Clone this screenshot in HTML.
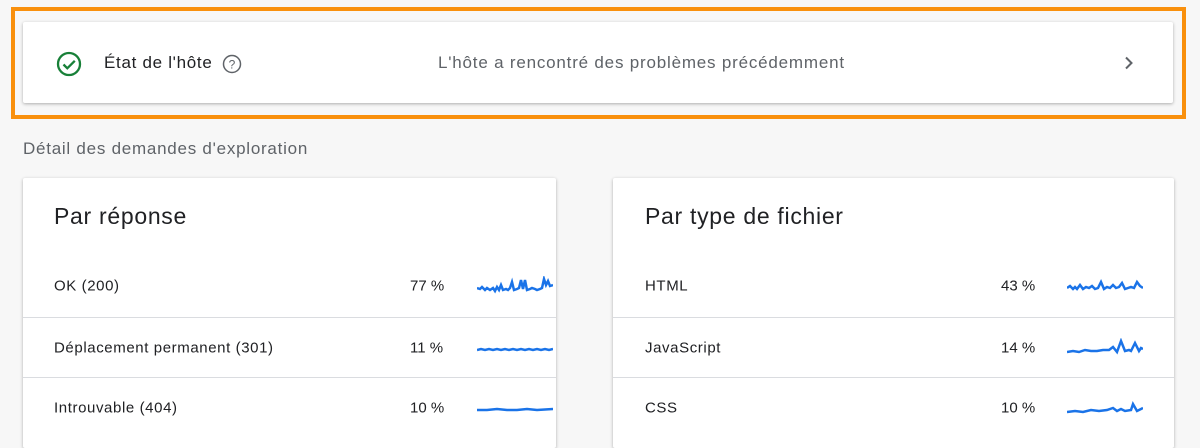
<!DOCTYPE html>
<html><head><meta charset="utf-8"><style>
body{margin:0;width:1200px;height:435px;background:#f7f7f7;font-family:"Liberation Sans",Roboto,sans-serif;overflow:hidden;position:relative;color:#202124}
.ob{position:absolute;left:11px;top:7px;width:1167px;height:104px;border:4px solid #f9900d;}
.card{position:absolute;background:#fff;box-shadow:0 1px 3px rgba(0,0,0,.3);border-radius:2px}
.t{position:absolute;white-space:nowrap}
.row{position:absolute;left:0;right:0;height:60px;border-top:1px solid #dadce0}
.row span{position:absolute;top:50%;transform:translateY(-50%);font-size:15px}
.row span.l{letter-spacing:0.6px}
svg.sp{position:absolute;top:50%;transform:translateY(-50%)}
</style></head><body>
<div class="ob"></div>
<div class="card" style="left:23px;top:22px;width:1150px;height:81px">
 <svg style="position:absolute;left:33px;top:29px" width="26" height="26" viewBox="0 0 26 26"><circle cx="13" cy="13" r="11" fill="none" stroke="#188038" stroke-width="2.3"/><path d="M7.5 13.5l3.8 3.8 7.5-7.5" fill="none" stroke="#188038" stroke-width="2.3"/></svg>
 <div class="t" style="left:81px;top:31px;font-size:17px;letter-spacing:0.7px">État de l'hôte</div>
 <svg style="position:absolute;left:199px;top:32px" width="20" height="20" viewBox="0 0 20 20"><circle cx="10" cy="10" r="8.5" fill="none" stroke="#5f6368" stroke-width="1.5"/><text x="10" y="14.5" font-size="12" text-anchor="middle" fill="#5f6368" font-family="Liberation Sans">?</text></svg>
 <div class="t" style="left:415px;top:31px;font-size:17px;letter-spacing:0.8px;color:#5f6368">L'hôte a rencontré des problèmes précédemment</div>
 <svg style="position:absolute;left:1099px;top:34px" width="14" height="14" viewBox="0 0 14 14"><path d="M4 1.5l5.5 5.5L4 12.5" fill="none" stroke="#5f6368" stroke-width="2"/></svg>
</div>
<div class="t" style="left:23px;top:139px;font-size:17px;letter-spacing:0.75px;color:#5f6368">Détail des demandes d'exploration</div>

<div class="card" style="left:23px;top:178px;width:533px;height:270px">
 <div class="t" style="left:31px;top:25px;font-size:23px;letter-spacing:0.7px">Par réponse</div>
 <div class="row" style="top:78px;border-top:none"><span class="l" style="left:31px">OK (200)</span><span style="left:387px">77 %</span>
  <svg class="sp" style="left:454px" width="76" height="20"><polyline fill="none" stroke="#1a73e8" stroke-width="2.5" points="0,12 3,13 5,11 8,14 10,12 13,14 16,12 18,15 20,11 22,14 24,9 26,14 29,13 31,14 33,12 35,6 37,14 40,13 42,12 44,4 46,13 48,4 50,14 53,13 55,12 58,13 60,14 63,13 65,12 67,3 69,9 71,5 73,10 76,9"/></svg></div>
 <div class="row" style="top:139px"><span class="l" style="left:31px">Déplacement permanent (301)</span><span style="left:387px">11 %</span>
  <svg class="sp" style="left:454px" width="76" height="20"><polyline fill="none" stroke="#1a73e8" stroke-width="2.5" points="0,12 4,11 8,12 12,11 16,12 20,11 24,12 28,11 32,12 36,11 40,12 44,11 48,12 52,11 56,12 60,11 64,12 68,11 72,12 76,11"/></svg></div>
 <div class="row" style="top:199px"><span class="l" style="left:31px">Introuvable (404)</span><span style="left:387px">10 %</span>
  <svg class="sp" style="left:454px" width="76" height="20"><polyline fill="none" stroke="#1a73e8" stroke-width="2.5" points="0,12 10,12 20,11 30,12 40,12 50,11 60,12 76,11"/></svg></div>
</div>

<div class="card" style="left:613px;top:178px;width:561px;height:270px">
 <div class="t" style="left:32px;top:25px;font-size:23px;letter-spacing:0.7px">Par type de fichier</div>
 <div class="row" style="top:78px;border-top:none"><span class="l" style="left:32px">HTML</span><span style="left:388px">43 %</span>
  <svg class="sp" style="left:454px" width="76" height="20"><polyline fill="none" stroke="#1a73e8" stroke-width="2.5" points="0,12 3,10 6,13 8,11 10,13 13,9 16,13 19,11 22,12 25,10 28,13 31,12 34,6 37,13 40,11 43,12 46,9 49,12 52,11 55,7 58,13 61,12 64,11 67,12 70,6 73,10 76,12"/></svg></div>
 <div class="row" style="top:139px"><span class="l" style="left:32px">JavaScript</span><span style="left:388px">14 %</span>
  <svg class="sp" style="left:454px" width="76" height="20"><polyline fill="none" stroke="#1a73e8" stroke-width="2.5" points="0,14 6,13 12,14 18,12 24,13 30,13 36,12 42,12 46,9 50,14 54,3 58,13 62,12 64,13 68,5 72,13 74,10 76,11"/></svg></div>
 <div class="row" style="top:199px"><span class="l" style="left:32px">CSS</span><span style="left:388px">10 %</span>
  <svg class="sp" style="left:454px" width="76" height="20"><polyline fill="none" stroke="#1a73e8" stroke-width="2.5" points="0,14 8,13 16,14 24,12 32,13 40,12 46,10 50,13 54,11 58,13 64,12 66,6 70,13 74,11 76,10"/></svg></div>
</div>
</body></html>
